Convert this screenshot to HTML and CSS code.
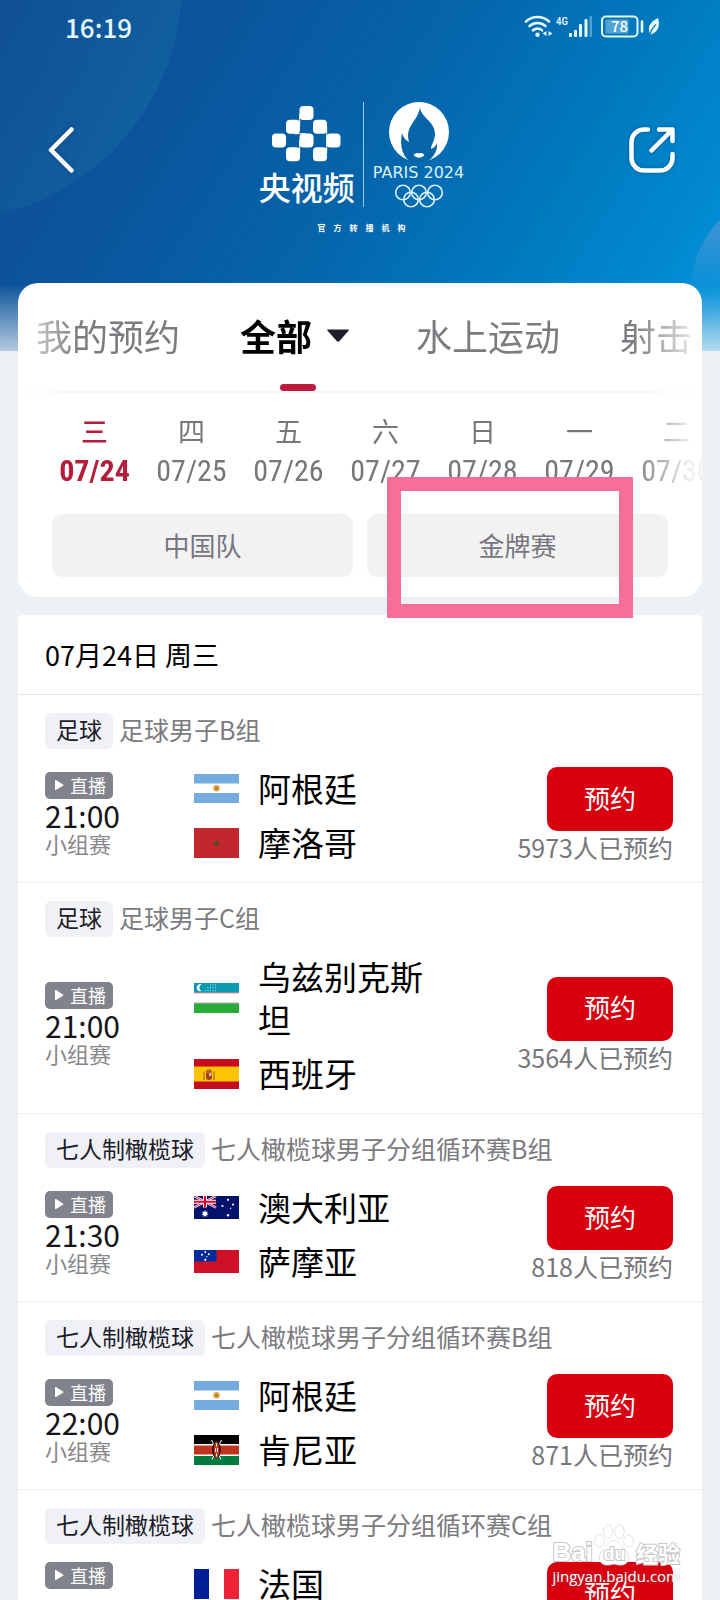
FILE: index.html
```html
<!DOCTYPE html>
<html lang="zh-CN">
<head>
<meta charset="utf-8">
<meta name="viewport" content="width=device-width, initial-scale=1">
<title>赛程</title>
<link rel="stylesheet" href="styles.css">
</head>
<body>
<svg class="defs" aria-hidden="true">
  <symbol id="play" viewBox="0 0 10 12"><path d="M1 1.6v8.8c0 .6.5.9 1 .6l7-4.3c.5-.3.5-1 0-1.300L2 1c-.5-.3-1 0-1 .6z" fill="#fff"/></symbol>
  <symbol id="argentina" viewBox="0 0 45 29"><path fill="#74acdf" d="M0 0h45v29H0z"/><path fill="#fff" d="M0 9.500h45v9.500H0z"/><circle cx="22.500" cy="14.300" r="3.200" fill="#e0a63f"/><circle cx="22.500" cy="14.300" r="1.600" fill="#b98637"/></symbol>
  <symbol id="morocco" viewBox="0 0 45 30"><path fill="#c1272d" d="M0 0h45v30H0z"/><path d="M22.500 11l1 3h3.200l-2.600 1.900 1 3.100-2.600-1.900-2.600 1.900 1-3.100-2.600-1.900h3.200z" fill="#5d4a24"/></symbol>
  <symbol id="uzbekistan" viewBox="0 0 45 30"><path fill="#fff" d="M0 0h45v30H0z"/><path fill="#0c9ab2" d="M0 0h45v9.500H0z"/><path fill="#a3484c" d="M0 9.500h45v.8H0zM0 19.700h45v.8H0z"/><path fill="#27ac38" d="M0 20.500h45V30H0z"/><path d="M7.500 1.300a3.600 3.600 0 100 6.800 3.800 3.800 0 010-6.800z" fill="#fff"/><path d="M11 7.700h11M13.500 4.800H22M16 2h6" stroke="#fff" stroke-width="1" stroke-dasharray="1 1.500" opacity=".7"/></symbol>
  <symbol id="spain" viewBox="0 0 45 30"><path fill="#c60b1e" d="M0 0h45v30H0z"/><path fill="#ffc400" d="M0 7.500h45v15H0z"/><path d="M12 13.500h6v4.500a3 3 0 01-6 0z" fill="#ad3a2b"/><path d="M12.500 13l.7-2h3.600l.7 2zM10 12.500v7.500M20 12.500v7.500M9 20h2M19 20h2" stroke="#a45c24" stroke-width="1" fill="#b5772c"/><path d="M15 14v3h2.500v-3z" fill="#dec0a0"/></symbol>
  <symbol id="australia" viewBox="0 0 45 23"><path fill="#00126b" d="M0 0h45v23H0z"/><path d="M0 0l22 11.500M22 0L0 11.500" stroke="#fff" stroke-width="2.400"/><path d="M0 0l22 11.500M22 0L0 11.500" stroke="#e4002b" stroke-width=".9"/><path d="M11 0v11.500M0 5.750h22" stroke="#fff" stroke-width="4"/><path d="M11 0v11.500M0 5.750h22" stroke="#e4002b" stroke-width="2.200"/><path d="M11 14l.9 1.900 2-.4-1 1.800 1.600 1.300-2 .5v2L11 19.800l-1.500 1.300v-2l-2-.5 1.600-1.300-1-1.800 2 .4z" fill="#fff"/><g fill="#fff"><circle cx="34" cy="3.800" r="1.100"/><circle cx="28.500" cy="10" r="1.100"/><circle cx="39" cy="8.500" r="1.100"/><circle cx="36.500" cy="12.200" r=".7"/><circle cx="34" cy="19.300" r="1.200"/></g></symbol>
  <symbol id="samoa" viewBox="0 0 45 23"><path fill="#ce1126" d="M0 0h45v23H0z"/><path fill="#002b9c" d="M0 0h22.500v11.500H0z"/><g fill="#fff"><circle cx="11.300" cy="2" r="1"/><circle cx="8" cy="4.800" r="1"/><circle cx="14.800" cy="4.300" r="1"/><circle cx="12.800" cy="6.600" r=".7"/><circle cx="11.300" cy="9.800" r="1.100"/></g></symbol>
  <symbol id="kenya" viewBox="0 0 45 30"><path fill="#fff" d="M0 0h45v30H0z"/><path fill="#000" d="M0 0h45v9H0z"/><path fill="#c0341d" d="M0 10.500h45v9H0z"/><path fill="#007a3d" d="M0 21h45v9H0z"/><path d="M17.500 5l9.500 19.500M27.500 5L18 24.500" stroke="#fff" stroke-width="1"/><ellipse cx="22.500" cy="15" rx="4.200" ry="8" fill="#000"/><ellipse cx="22.500" cy="15" rx="2.800" ry="8.500" fill="#c0341d"/><path d="M22.500 8.500v3M22.500 18.500v3M21.500 13.200v3.600M23.500 13.200v3.600" stroke="#fff" stroke-width="1"/></symbol>
  <symbol id="france" viewBox="0 0 45 30"><path fill="#001e96" d="M0 0h15v30H0z"/><path fill="#fff" d="M15 0h15v30H15z"/><path fill="#ee2436" d="M30 0h15v30H30z"/></symbol>
</svg>

<div class="app">
  <div class="backdrop"></div>

  <header class="hero">
    <div class="status">
      <time class="clock">16:19</time>
      <svg class="status-icons" viewBox="0 0 138 26" fill="none" stroke="#e4f8ff" stroke-linecap="round">
        <path d="M2 7.500a17 17 0 0123 0" stroke-width="2.600"/><path d="M5.500 12a12 12 0 0116 0" stroke-width="2.600"/><path d="M9 16.300a7 7 0 019 0" stroke-width="2.600"/>
        <circle cx="13.500" cy="20.800" r="2.200" fill="#e4f8ff" stroke="none"/>
        <path d="M22.500 17v5l-4-2.500zM24.500 17v5l4-2.500z" fill="#e4f8ff" stroke="none"/>
        <g fill="#e4f8ff" stroke="none"><text x="32" y="11" class="net-label">4G</text><rect x="45" y="19" width="3" height="4" rx="1"/><rect x="50" y="16" width="3" height="7" rx="1"/><rect x="55" y="10" width="3" height="13" rx="1"/><rect x="60.500" y="5" width="3" height="18" rx="1"/><rect x="65.500" y="2" width="2.500" height="21" rx="1" opacity=".35"/></g>
        <rect x="78" y="2.500" width="35.500" height="20" rx="4" stroke-width="2"/>
        <rect x="81.500" y="5.500" width="23" height="14" rx="1" fill="#e4f8ff" opacity=".35" stroke="none"/>
        <text x="87" y="18" class="battery-label" fill="#fff" stroke="none">78</text>
        <path d="M118 7.500v10" stroke-width="2.600"/>
        <path d="M134 4c-6 3-10 7-9 13l1 3c1 1 2 0 4-1 5-3 6-9 4-15z" fill="#e4f8ff" stroke="none"/><path d="M125.500 22c1-5 3-8 6-11" stroke="#0878bb" stroke-width="1.200"/>
      </svg>
    </div>
    <div class="nav">
      <button class="icon-button" type="button" aria-label="返回">
        <svg width="26" height="46" viewBox="0 0 26 46" fill="none" stroke="#fff" stroke-width="4.500" stroke-linecap="round" stroke-linejoin="round"><path d="M23.500 2.500L3 23l20.500 20.500"/></svg>
      </button>
      <div class="brand">
        <div class="brand-row">
          <div class="cctv">
            <svg width="69" height="56" viewBox="0 0 69 56" fill="#fff"><rect x="27.500" y="0" width="14" height="14" rx="4"/><rect x="14" y="13.800" width="14" height="14" rx="4"/><rect x="41" y="13.800" width="14" height="14" rx="4"/><rect x="0" y="27.500" width="14" height="14" rx="4"/><rect x="27.500" y="27.500" width="14" height="14" rx="4"/><rect x="54.500" y="27.500" width="14" height="14" rx="4"/><rect x="14" y="41.300" width="14" height="14" rx="4"/><rect x="41" y="41.300" width="14" height="14" rx="4"/><path d="M22 27.700h12M27.700 8v12M54.700 21v13M27.700 34v13M54.700 34v13" fill="none" stroke="#fff"/></svg>
            <span class="cctv-name">央视频</span>
          </div>
          <div class="paris">
            <svg width="60" height="60" viewBox="0 0 60 60"><circle cx="30" cy="30" r="30" fill="#fff"/><path d="M31 5c0 10 15 14 15 27 0 7-4 10-4 15 3-1 5-3 6-6 1 8-4 15-10 19H22C15 56 10 46 13 31c1 4 3 7 7 9-2-7-1-12 3-18 4-6 7-10 8-17z" fill="#0664a8"/><path d="M24.500 53c2-2 4-2.500 5.500-1.500 1.500-1 3.500-.5 5.500 1.500-3 3.500-8 3.500-11 0z" fill="#fff"/></svg>
            <span class="paris-name">PARIS 2024</span>
            <svg width="50" height="24" viewBox="0 0 50 24" fill="none" stroke="#dcf1ff" stroke-width="1.600"><circle cx="9" cy="8.500" r="7.300"/><circle cx="25" cy="8.500" r="7.300"/><circle cx="41" cy="8.500" r="7.300"/><circle cx="17" cy="15.500" r="7.300"/><circle cx="33" cy="15.500" r="7.300"/></svg>
          </div>
        </div>
        <span class="partner">官&emsp;方&emsp;转&emsp;播&emsp;机&emsp;构</span>
      </div>
      <button class="icon-button" type="button" aria-label="分享">
        <svg width="46" height="46" viewBox="0 0 46 46" fill="none" stroke="#fff" stroke-width="4.500" stroke-linecap="round" stroke-linejoin="round"><path d="M19 2.500h-4A12.500 12.500 0 002.500 15v16A12.500 12.500 0 0015 43.500h16A12.500 12.500 0 0043.500 31v-4"/><path d="M30 2.500h13.500V14M43 3L22.500 23.500"/></svg>
      </button>
    </div>
  </header>

  <section class="panel">
    <nav class="tabs">
      <button class="tab" type="button">我的预约</button>
      <button class="tab active" type="button">全部<svg width="22" height="13" viewBox="0 0 22 13"><path d="M1 .5h20c.8 0 1 .6.500 1.200l-9 10.300c-.8.9-2 .9-2.800 0L.6 1.700C0 1 .2.500 1 .5z" fill="#1e1e2a"/></svg></button>
      <button class="tab" type="button">水上运动</button>
      <button class="tab" type="button">射击</button>
    </nav>
    <div class="days">
      <button class="day selected" type="button"><span>三</span><span class="date">07/24</span></button>
      <button class="day" type="button"><span>四</span><span class="date">07/25</span></button>
      <button class="day" type="button"><span>五</span><span class="date">07/26</span></button>
      <button class="day" type="button"><span>六</span><span class="date">07/27</span></button>
      <button class="day" type="button"><span>日</span><span class="date">07/28</span></button>
      <button class="day" type="button"><span>一</span><span class="date">07/29</span></button>
      <button class="day" type="button"><span>二</span><span class="date">07/30</span></button>
    </div>
    <div class="filters">
      <button class="filter" type="button">中国队</button>
      <div class="filter-slot">
        <button class="filter" type="button">金牌赛</button>
        <div class="highlight"></div>
      </div>
    </div>
  </section>

  <main class="schedule">
    <h1 class="schedule-date">07月24日 周三</h1>

    <article class="match">
      <div class="match-head"><span class="sport">足球</span><span class="event">足球男子B组</span></div>
      <div class="match-body">
        <div class="when"><span class="live"><svg width="10" height="12"><use href="#play"/></svg>直播</span><time class="start">21:00</time><span class="stage">小组赛</span></div>
        <div class="teams">
          <div class="team"><svg class="flag" viewBox="0 0 45 29"><use href="#argentina"/></svg><span>阿根廷</span></div>
          <div class="team"><svg class="flag" viewBox="0 0 45 30"><use href="#morocco"/></svg><span>摩洛哥</span></div>
        </div>
        <div class="booking"><button class="book" type="button">预约</button><span class="count">5973人已预约</span></div>
      </div>
    </article>

    <article class="match">
      <div class="match-head"><span class="sport">足球</span><span class="event">足球男子C组</span></div>
      <div class="match-body">
        <div class="when"><span class="live"><svg width="10" height="12"><use href="#play"/></svg>直播</span><time class="start">21:00</time><span class="stage">小组赛</span></div>
        <div class="teams">
          <div class="team"><svg class="flag" viewBox="0 0 45 30"><use href="#uzbekistan"/></svg><span>乌兹别克斯坦</span></div>
          <div class="team"><svg class="flag" viewBox="0 0 45 30"><use href="#spain"/></svg><span>西班牙</span></div>
        </div>
        <div class="booking"><button class="book" type="button">预约</button><span class="count">3564人已预约</span></div>
      </div>
    </article>

    <article class="match">
      <div class="match-head"><span class="sport">七人制橄榄球</span><span class="event">七人橄榄球男子分组循环赛B组</span></div>
      <div class="match-body">
        <div class="when"><span class="live"><svg width="10" height="12"><use href="#play"/></svg>直播</span><time class="start">21:30</time><span class="stage">小组赛</span></div>
        <div class="teams">
          <div class="team"><svg class="flag" viewBox="0 0 45 23"><use href="#australia"/></svg><span>澳大利亚</span></div>
          <div class="team"><svg class="flag" viewBox="0 0 45 23"><use href="#samoa"/></svg><span>萨摩亚</span></div>
        </div>
        <div class="booking"><button class="book" type="button">预约</button><span class="count">818人已预约</span></div>
      </div>
    </article>

    <article class="match">
      <div class="match-head"><span class="sport">七人制橄榄球</span><span class="event">七人橄榄球男子分组循环赛B组</span></div>
      <div class="match-body">
        <div class="when"><span class="live"><svg width="10" height="12"><use href="#play"/></svg>直播</span><time class="start">22:00</time><span class="stage">小组赛</span></div>
        <div class="teams">
          <div class="team"><svg class="flag" viewBox="0 0 45 29"><use href="#argentina"/></svg><span>阿根廷</span></div>
          <div class="team"><svg class="flag" viewBox="0 0 45 30"><use href="#kenya"/></svg><span>肯尼亚</span></div>
        </div>
        <div class="booking"><button class="book" type="button">预约</button><span class="count">871人已预约</span></div>
      </div>
    </article>

    <article class="match">
      <div class="match-head"><span class="sport">七人制橄榄球</span><span class="event">七人橄榄球男子分组循环赛C组</span></div>
      <div class="match-body">
        <div class="when"><span class="live"><svg width="10" height="12"><use href="#play"/></svg>直播</span></div>
        <div class="teams">
          <div class="team"><svg class="flag" viewBox="0 0 45 30"><use href="#france"/></svg><span>法国</span></div>
        </div>
        <div class="booking"><button class="book" type="button">预约</button></div>
      </div>
    </article>
  </main>

  <div class="watermark">
    <div class="watermark-logo">
      <span class="latin">Bai</span>
      <span class="paw"><svg width="40" height="42" viewBox="0 0 40 42" fill="#fff" stroke="#c8c8c8"><ellipse cx="5.500" cy="17" rx="4.500" ry="6"/><ellipse cx="14" cy="7.500" rx="4.500" ry="6.500"/><ellipse cx="25.500" cy="7.500" rx="4.500" ry="6.500"/><ellipse cx="34.500" cy="17" rx="4.500" ry="6"/><path d="M20 17c6 0 7 5 11 9 5 5 5 14-3 15-4 .5-5-1-8-1s-4 1.500-8 1c-8-1-8-10-3-15 4-4 5-9 11-9z"/></svg><span class="du">du</span></span>
      <span>经验</span>
    </div>
    <div class="watermark-url">jingyan.baidu.com</div>
  </div>
</div>
</body>
</html>
```
FILE: styles.css
```css
* { box-sizing: border-box; }

body {
  margin: 0;
  background: #edf1f6;
  font-family: "Noto Sans CJK SC", "Noto Sans", sans-serif;
  color: #000;
}

button {
  margin: 0;
  padding: 0;
  border: 0;
  background: none;
  font: inherit;
  color: inherit;
}

svg { display: block; flex: none; }

.defs { position: absolute; width: 0; height: 0; }

.app {
  position: relative;
  height: 100vh;
  overflow: hidden;
}

/* Header */
.backdrop {
  position: absolute;
  top: 0;
  left: 0;
  right: 0;
  height: 351px;
  overflow: hidden;
  background:
    linear-gradient(to bottom, rgba(237, 241, 246, 0) 284px, rgba(237, 241, 246, 0.75) 351px),
    linear-gradient(122deg, #0e4c92 0%, #0b559c 25%, #0565ab 50%, #007cc1 74%, #0394dc 100%);
}

.backdrop::before {
  content: "";
  position: absolute;
  left: -294px;
  top: -255px;
  width: 476px;
  height: 476px;
  border-radius: 50%;
  background: linear-gradient(115deg, rgba(40, 140, 180, 0) 50%, rgba(40, 140, 180, 0.26) 100%);
}

.backdrop::after {
  content: "";
  position: absolute;
  right: -169px;
  top: 191px;
  width: 198px;
  height: 198px;
  border-radius: 50%;
  background: linear-gradient(to bottom, rgba(110, 150, 210, 0.8) 0, rgba(10, 150, 220, 0.3) 50%, rgba(10, 150, 220, 0) 70%);
}

.hero { position: relative; color: #fff; }

.status {
  display: flex;
  justify-content: space-between;
  align-items: center;
  height: 54px;
  padding: 0 58px 0 65px;
}

.clock { font-size: 26px; line-height: 32px; font-weight: 500; color: #e4f8ff; }
.status-icons { width: 138px; height: 26px; overflow: visible; }
.net-label { font: 500 11px "Roboto Condensed", "Roboto", sans-serif; }
.battery-label { font: 500 15px "Noto Sans CJK SC", sans-serif; }

.nav {
  display: grid;
  grid-template-columns: 1fr auto 1fr;
  align-items: start;
  height: 229px;
  padding: 48px 45px 0 48px;
}

.icon-button { margin-top: 25px; justify-self: start; filter: drop-shadow(0 0 2px rgba(0, 40, 90, 0.4)); }
.icon-button:last-child { justify-self: end; }

.brand { display: flex; flex-direction: column; align-items: center; gap: 14px; }
.brand-row { display: flex; align-items: stretch; height: 105px; }

.cctv {
  display: flex;
  flex-direction: column;
  align-items: center;
  gap: 6px;
  padding: 4px 8px 0 0;
  border-right: 1px solid rgba(220, 240, 255, 0.7);
}

.cctv-name { font-size: 32px; line-height: 36px; font-weight: 500; }

.paris { display: flex; flex-direction: column; align-items: center; padding-left: 9px; gap: 3px; }
.paris-name { font: 16px/16px "DejaVu Sans", sans-serif; color: #dcf1ff; white-space: nowrap; }
.partner { font-size: 8px; line-height: 14px; font-weight: 700; }

/* Filter panel */
.panel {
  position: relative;
  z-index: 1;
  margin: 0 18px 18px;
  border-radius: 20px;
  background: #fff;
}

.tabs {
  display: flex;
  gap: 60px;
  height: 110px;
  padding-left: 18px;
  overflow: hidden;
  border-bottom: 2px solid #f6f6f6;
  mask-image: linear-gradient(to right, rgba(0, 0, 0, 0.3) 10px, #000 60px, #000 calc(100% - 70px), rgba(0, 0, 0, 0.2) calc(100% - 10px));
}

.tab {
  flex: none;
  position: relative;
  display: flex;
  align-items: center;
  gap: 15px;
  padding-bottom: 4px;
  font-size: 36px;
  color: #7b7b80;
}

.tab.active { min-width: 116px; font-weight: 700; color: #000; }

.tab.active::after {
  content: "";
  position: absolute;
  left: 40px;
  right: 40px;
  bottom: 0;
  height: 7px;
  border-radius: 4px;
  background: #bb1b3c;
}

.days {
  display: flex;
  height: 121px;
  padding: 18px 0 0 28px;
  overflow: hidden;
  mask-image: linear-gradient(to right, #000 calc(100% - 70px), rgba(0, 0, 0, 0.1) calc(100% - 10px));
}

.day {
  flex: none;
  display: flex;
  flex-direction: column;
  align-items: center;
  width: 97px;
  font-size: 27px;
  line-height: 40px;
  color: #76767b;
}

.date { font-family: "Roboto Condensed", "DejaVu Sans Condensed", sans-serif; font-size: 30px; line-height: 40px; }
.day.selected { color: #b51d3c; font-weight: 500; }
.day.selected .date { font-weight: 700; }

.filters { display: grid; grid-template-columns: 1fr 1fr; gap: 14px; padding: 0 34px 20px; }

.filter {
  width: 100%;
  height: 63px;
  padding-bottom: 3px;
  border-radius: 11px;
  background: #f2f2f2;
  font-size: 26px;
  color: #777580;
}

.filter-slot { position: relative; }

.highlight {
  position: absolute;
  inset: -37px 35px -41px 20px;
  border: 14px solid #f76f98;
  pointer-events: none;
}

/* Schedule */
.schedule {
  position: relative;
  margin: 0 18px;
  border-radius: 5px 5px 0 0;
  background: #fff;
}

.schedule-date {
  margin: 0;
  padding: 20px 27px 19px;
  border-bottom: 1px solid #e3e3e5;
  font-size: 27px;
  line-height: 40px;
  font-weight: 400;
}

.match { padding: 18px 27px; border-bottom: 1px solid #f0f0f2; }
.match-head { display: flex; align-items: center; gap: 6px; height: 36px; }

.sport {
  padding: 0 11px 3px;
  border-radius: 6px;
  background: #f0f1f7;
  font-size: 23px;
  line-height: 33px;
  color: #1c1c28;
}

.event { padding-bottom: 3px; font-size: 25px; line-height: 33px; color: #7b7b80; white-space: nowrap; }

.match-body {
  display: grid;
  grid-template-columns: 149px 1fr auto;
  align-items: center;
  padding-top: 18px;
}

.when { display: flex; flex-direction: column; align-items: flex-start; }

.live {
  display: flex;
  align-items: center;
  gap: 6px;
  height: 27px;
  padding: 0 7px 1px 9px;
  border-radius: 5px;
  background: #80828c;
  font-size: 18px;
  line-height: 26px;
  color: #fff;
}

.start { font-size: 30px; line-height: 32px; color: #15151a; }
.stage { padding-bottom: 4px; font-size: 22px; line-height: 24px; color: #88888c; }

.teams { display: grid; gap: 11px; }
.team { display: flex; align-items: center; gap: 19px; font-size: 33px; line-height: 43px; }
.team span { max-width: 170px; }
.flag { width: 45px; }

.booking { display: flex; flex-direction: column; align-items: flex-end; padding-right: 2px; }

.book {
  width: 126px;
  height: 64px;
  padding-bottom: 4px;
  border-radius: 10px;
  background: #d8000f;
  font-size: 26px;
  color: #fff;
}

.count { font-size: 25px; line-height: 33px; color: #77777b; }

.match:last-child .match-body { align-items: start; }

/* Watermark */
.watermark { position: absolute; right: 40px; bottom: 14px; }

.watermark-logo {
  display: flex;
  align-items: flex-end;
  justify-content: space-between;
  color: #fff;
  font-size: 22px;
  line-height: 28px;
  font-weight: 700;
  -webkit-text-stroke: 2px #c8c8c8;
  paint-order: stroke fill;
}

.latin { font-family: "Liberation Sans", sans-serif; font-size: 26px; }
.paw { position: relative; }
.du { position: absolute; left: 9px; bottom: 2px; font: 700 18px/20px "Liberation Sans", sans-serif; }
.watermark-url { font: 15px/20px "Open Sans", sans-serif; color: #fff; text-shadow: 0 0 2px rgba(120, 120, 120, 0.6); }
```
